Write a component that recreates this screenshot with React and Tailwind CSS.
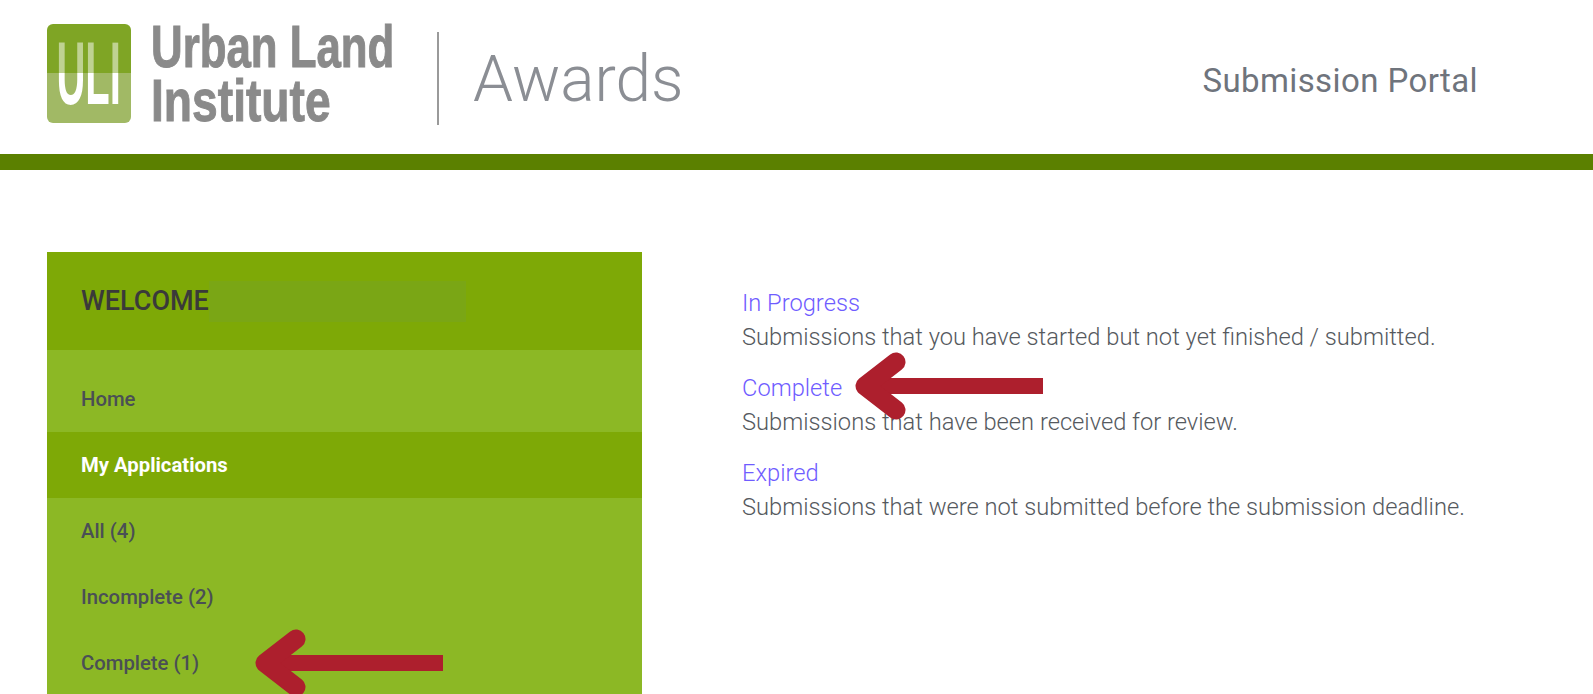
import React from 'react';

const ArrowLeft = ({ className }) => (
  <svg className={className} viewBox="0 0 190 70" fill="none">
    <path d="M188 35H12" stroke="#ad1f2d" strokeWidth="16" />
    <path d="M41 11 10 35l31 24" stroke="#ad1f2d" strokeWidth="19" strokeLinecap="round" strokeLinejoin="round" />
  </svg>
);

const Logo = () => (
  <div className="flex items-center -mt-[7px]">
    <div className="w-[84px] h-[99px] rounded-[6px] bg-[linear-gradient(#7fa525_49%,#a1b965_49%)] flex justify-center shrink-0">
      <span className="font-['Liberation_Sans'] font-bold text-[89px] leading-[99px] scale-x-[0.45] bg-[linear-gradient(rgba(255,255,255,0.5)_49%,#ffffff_49%)] bg-clip-text text-transparent">
        ULI
      </span>
    </div>
    <div className="ml-5 w-[242px] text-[#8a8a8a] font-bold font-['Liberation_Sans'] text-[60px] leading-[54px] [-webkit-text-stroke:1px_#8a8a8a]">
      <div className="origin-left scale-x-[0.73] whitespace-nowrap">Urban Land</div>
      <div className="origin-left scale-x-[0.77] whitespace-nowrap">Institute</div>
    </div>
  </div>
);

const navItems = [
  { label: 'Home', rowClass: 'mt-4 font-medium text-[#4a4f55]' },
  { label: 'My Applications', rowClass: 'bg-[#7ea906] text-white font-bold' },
  { label: 'All (4)', rowClass: 'font-medium text-[#4a4f55]' },
  { label: 'Incomplete (2)', rowClass: 'font-medium text-[#4a4f55]' },
  { label: 'Complete (1)', rowClass: 'font-medium text-[#4a4f55]' },
];

const statuses = [
  { name: 'In Progress', text: 'Submissions that you have started but not yet finished / submitted.' },
  { name: 'Complete', text: 'Submissions that have been received for review.' },
  { name: 'Expired', text: 'Submissions that were not submitted before the submission deadline.' },
];

export default function App() {
  return (
    <div className="relative h-screen overflow-hidden bg-white font-['Roboto',sans-serif]">
      <header className="h-[154px] flex items-center pl-[47px] pr-[115px]">
        <Logo />
        <div className="ml-[44px] w-[2px] h-[93px] bg-[#9a9a9a] mt-[3px]" />
        <div className="ml-[34px] text-[64px] font-light leading-none text-[#8b8e94] mt-[5px]">Awards</div>
        <div className="ml-auto text-[33px] text-[#6f747c] tracking-[0.4px] mt-[8px]">Submission Portal</div>
      </header>
      <div className="h-4 bg-[#5b8000]" />

      <main className="flex pl-[47px] pt-[82px]">
        <aside className="w-[595px] h-[600px] bg-[#8cb825] shrink-0">
          <div className="h-[98px] bg-[#7ea906] flex items-center pl-[34px] text-[27px] font-medium text-[#3a3a3a]">
            WELCOME
            <div className="w-[257px] h-[41px] bg-[#7aa615]" />
          </div>
          {navItems.map((item) => (
            <div key={item.label} className={`h-[66px] flex items-center pl-[34px] text-[20.3px] ${item.rowClass}`}>
              {item.label}
            </div>
          ))}
        </aside>

        <section className="ml-[100px] pt-[34px]">
          {statuses.map((s) => (
            <div key={s.name} className="mb-[17px] text-[23.7px] leading-[34px] font-light whitespace-nowrap">
              <div className="text-[#6f5cff]">{s.name}</div>
              <div className="text-[#55595e]">{s.text}</div>
            </div>
          ))}
        </section>
      </main>

      {/* annotation arrows */}
      <ArrowLeft className="absolute left-[855px] top-[351px] w-[190px] h-[70px]" />
      <ArrowLeft className="absolute left-[255px] top-[628px] w-[190px] h-[70px]" />
    </div>
  );
}
